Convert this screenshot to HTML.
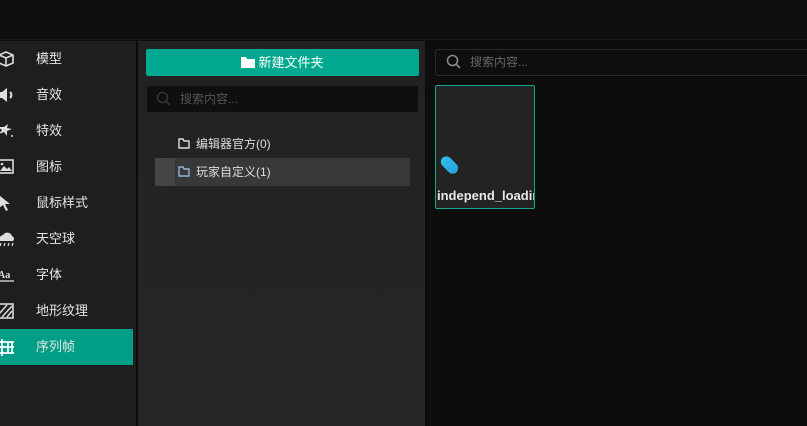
<!DOCTYPE html>
<html><head><meta charset="utf-8"><style>
*{margin:0;padding:0;box-sizing:border-box}
body{width:807px;height:426px;overflow:hidden;background:#0d0d0d;font-family:"Liberation Sans","Noto Sans CJK SC",sans-serif;color:#ddd;font-size:12px;position:relative}
.top{position:absolute;left:0;top:0;width:807px;height:40px;background:#0f0f0f;border-bottom:1px solid #1c1c1c}
.side{position:absolute;left:0;top:41px;width:137px;height:385px;background:#1e1e1e;border-right:1px solid #0a0a0a}
.item{position:absolute;left:0;width:133px;height:36px;line-height:36px;padding-left:36px;font-size:13px;color:#e6e6e6}
.item.act{background:#009e87}
.ic{position:absolute;left:-2px;top:9px;width:18px;height:18px}
.mid{position:absolute;left:138px;top:41px;width:288px;height:385px;background:linear-gradient(#222,#262626);border-right:1px solid #0a0a0a}
.btn{position:absolute;left:146px;top:49px;width:273px;height:27px;background:#00a88f;border-radius:2px;color:#fff;font-size:13px;text-align:center;line-height:27px}
.srch{position:absolute;left:147px;top:86px;width:271px;height:26px;background:#0f0f0f;border-radius:2px;color:#555;line-height:26px;padding-left:33px;font-size:12px}
.tree{position:absolute;font-size:12px;color:#ddd;line-height:28px}
.right{position:absolute;left:427px;top:41px;width:380px;height:385px;background:#0d0d0d}
.rs{position:absolute;left:435px;top:49px;width:380px;height:27px;border:1px solid #2a2a2a;border-radius:3px;background:#0e0e0e;color:#666;line-height:25px;padding-left:34px;font-size:12px}
.card{position:absolute;left:435px;top:85px;width:100px;height:124px;border:1px solid #17a58e;border-radius:2px;background:#232323;overflow:hidden}
</style></head><body>
<div class="top"></div>
<div class="side">
<div class="item" style="top:0">模型<svg class="ic" viewBox="0 0 18 18"><path d="M1 5l7-3 7 3v8l-7 3-7-3zM1 5l7 3 7-3M8 8v8" fill="none" stroke="#ddd" stroke-width="1.6"/></svg></div>
<div class="item" style="top:36px">音效<svg class="ic" viewBox="0 0 18 18"><path d="M0 6h4l5-4v14l-5-4H0z" fill="#ddd"/><path d="M12 6a4 4 0 010 6" stroke="#ddd" stroke-width="2" fill="none"/></svg></div>
<div class="item" style="top:72px">特效<svg class="ic" viewBox="0 0 18 18"><path d="M0 5l4 3-3 4 5-2 3 4 0-5 5-2-5-1 1-4-4 3z" fill="#ddd"/><circle cx="14" cy="14" r="1" fill="#ddd"/></svg></div>
<div class="item" style="top:108px">图标<svg class="ic" viewBox="0 0 18 18"><rect x="0" y="2" width="15" height="13" fill="none" stroke="#ddd" stroke-width="1.6"/><path d="M2 13l4-5 3 3 2-2 3 4z" fill="#ddd"/><circle cx="4" cy="6" r="1.3" fill="#ddd"/></svg></div>
<div class="item" style="top:144px">鼠标样式<svg class="ic" viewBox="0 0 18 18"><path d="M1 1l11 9h-5l3 6-2 1-3-6-4 3z" fill="#ddd"/></svg></div>
<div class="item" style="top:180px">天空球<svg class="ic" viewBox="0 0 18 18"><path d="M2 11a4 4 0 013-6 5 5 0 019 1 3 3 0 011 5z" fill="#ddd"/><path d="M3 13l-1 3M7 13l-1 3M11 13l-1 3M15 13l-1 3" stroke="#ddd" stroke-width="1.2"/></svg></div>
<div class="item" style="top:216px">字体<svg class="ic" viewBox="0 0 18 18"><text x="0" y="12" font-size="10" font-weight="bold" fill="#ddd" font-family="Liberation Serif">Aa</text><path d="M0 15h16" stroke="#ddd" stroke-width="1.3"/></svg></div>
<div class="item" style="top:252px">地形纹理<svg class="ic" viewBox="0 0 18 18"><rect x="0" y="2" width="15" height="14" fill="none" stroke="#ddd" stroke-width="1.6"/><path d="M1 12l8-9M4 15l10-11M9 15l5-6" stroke="#ddd" stroke-width="1.5"/></svg></div>
<div class="item act" style="top:288px">序列帧<svg class="ic" viewBox="0 0 18 18"><path d="M0 4h16M0 9h16M0 15h16M4 1v17M10 4v11M14 4v11" stroke="#fff" stroke-width="1.7" fill="none"/></svg></div>
</div>
<div class="mid"></div>
<div class="btn"><svg width="14" height="12" viewBox="0 0 14 12" style="vertical-align:-1px;margin-right:3px"><path d="M0 1h5l1 2h8v9H0z" fill="#fff"/></svg>新建文件夹</div>
<div class="srch"><svg width="16" height="16" viewBox="0 0 16 16" style="position:absolute;left:9px;top:5px"><circle cx="6.5" cy="6.5" r="5" fill="none" stroke="#333" stroke-width="1.6"/><path d="M10 10l4 4" stroke="#333" stroke-width="1.6"/></svg>搜索内容...</div>
<div style="position:absolute;left:155px;top:158px;width:255px;height:28px;background:#383838;border-radius:2px"></div>
<div style="position:absolute;left:155px;top:158px;width:20px;height:28px;background:#454545;border-radius:2px 0 0 2px"></div>
<div class="tree" style="left:178px;top:130px"><svg width="12" height="11" viewBox="0 0 12 11" style="vertical-align:-1px;margin-right:6px"><path d="M1 1h4l1 2h5v7H1z" fill="none" stroke="#ddd" stroke-width="1.4"/></svg>编辑器官方(0)</div>
<div class="tree" style="left:178px;top:158px"><svg width="12" height="11" viewBox="0 0 12 11" style="vertical-align:-1px;margin-right:6px"><path d="M1 1h4l1 2h5v7H1z" fill="none" stroke="#8fb4d8" stroke-width="1.4"/></svg>玩家自定义(1)</div>
<div class="right"></div>
<div class="rs"><svg width="16" height="16" viewBox="0 0 16 16" style="position:absolute;left:10px;top:4px"><circle cx="6.5" cy="6.5" r="5" fill="none" stroke="#888" stroke-width="1.6"/><path d="M10 10l4 4" stroke="#888" stroke-width="1.6"/></svg>搜索内容...</div>
<div class="card">
<div style="position:absolute;left:8px;top:69px;width:11px;height:20px;border-radius:6px;background:linear-gradient(#2cc0e6,#2a9fe0);transform:rotate(-45deg)"></div>
<div style="position:absolute;left:1px;top:102px;font-size:13px;font-weight:bold;color:#e8e8e8;white-space:nowrap">independ_loading</div>
</div>
</body></html>
